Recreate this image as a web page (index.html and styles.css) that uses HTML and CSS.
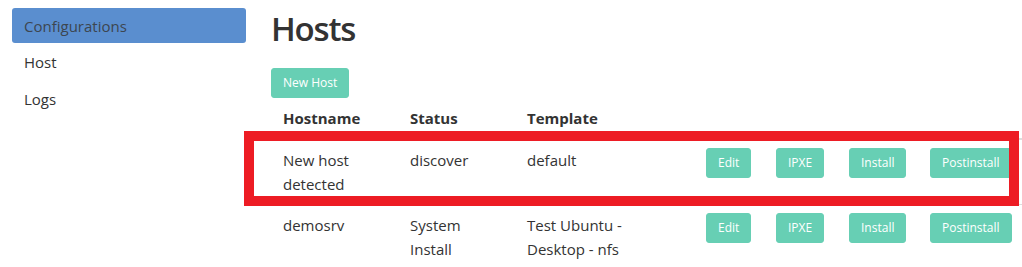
FILE: index.html
```html
<!DOCTYPE html>
<html lang="en">
<head>
    <meta charset="UTF-8">
    <meta name="viewport" content="width=device-width, initial-scale=1.0">
    <title>Hosts</title>
    <link rel="stylesheet" href="styles.css">
</head>
<body>
    <div class="layout">
        <nav class="sidebar">
            <a class="nav-item active" href="#">Configurations</a>
            <a class="nav-item" href="#">Host</a>
            <a class="nav-item" href="#">Logs</a>
        </nav>
        <main class="content">
            <h1>Hosts</h1>
            <button class="btn">New Host</button>
            <table class="hosts">
                <colgroup>
                    <col class="c-name">
                    <col class="c-status">
                    <col class="c-template">
                    <col class="c-edit">
                    <col class="c-ipxe">
                    <col class="c-install">
                    <col class="c-post">
                </colgroup>
                <thead>
                    <tr>
                        <th>Hostname</th>
                        <th>Status</th>
                        <th>Template</th>
                        <th></th>
                        <th></th>
                        <th></th>
                        <th></th>
                    </tr>
                </thead>
                <tbody>
                    <tr>
                        <td>New host detected</td>
                        <td>discover</td>
                        <td>default</td>
                        <td><button class="btn">Edit</button></td>
                        <td><button class="btn">IPXE</button></td>
                        <td><button class="btn">Install</button></td>
                        <td><button class="btn">Postinstall</button></td>
                    </tr>
                    <tr>
                        <td>demosrv</td>
                        <td>System Install</td>
                        <td><span class="tpl">Test Ubuntu - Desktop - nfs</span></td>
                        <td><button class="btn">Edit</button></td>
                        <td><button class="btn">IPXE</button></td>
                        <td><button class="btn">Install</button></td>
                        <td><button class="btn">Postinstall</button></td>
                    </tr>
                </tbody>
            </table>
        </main>
    </div>
    <div class="highlight"></div>
</body>
</html>
```

FILE: styles.css
```css
body {
    font-family: "Open Sans", "Noto Sans", sans-serif;
    font-size: 15px;
    line-height: 24px;
    color: #333;
    margin: 0;
    padding: 0;
    background-color: #fff;
}
.layout {
    display: flex;
    gap: 25px;
    padding: 8px 0 0 12px;
}
.sidebar {
    width: 234px;
    flex-shrink: 0;
    display: flex;
    flex-direction: column;
}
.nav-item {
    display: block;
    padding: 6px 12px;
    height: 24px;
    color: #333;
    text-decoration: none;
}
.nav-item.active {
    background-color: #5a8ecf;
    border-radius: 3px;
    color: #3d4650;
    height: 23px;
}
.nav-item + .nav-item {
    margin-top: 1px;
}
.content {
    flex: 1;
    min-width: 0;
}
h1 {
    font-size: 33px;
    font-weight: 600;
    letter-spacing: -1.2px;
    line-height: 40px;
    margin: 1px 0 19px;
    color: #333;
}
.btn {
    font-family: inherit;
    font-size: 12px;
    line-height: 18px;
    color: #fff;
    background-color: #67cfb4;
    border: 1px solid #67cfb4;
    border-radius: 3px;
    padding: 5px 11px;
    cursor: pointer;
}
.hosts {
    border-collapse: collapse;
    table-layout: fixed;
    width: 751px;
}
.c-name { width: 127px; }
.c-status { width: 117px; }
.c-template { width: 179px; }
.c-edit { width: 70px; }
.c-ipxe { width: 73px; }
.c-install { width: 81px; }
.c-post { width: 104px; }
.hosts th,
.hosts td {
    text-align: left;
    vertical-align: top;
    padding: 8px 12px;
}
.hosts th {
    font-weight: 700;
    border-bottom: 2px solid #ddd;
}
.hosts td {
    border-top: 1px solid #ddd;
}
.tpl {
    display: inline-block;
    max-width: 100px;
}
.highlight {
    position: absolute;
    left: 244px;
    top: 131px;
    width: 755px;
    height: 55px;
    border: 10px solid #ed1c24;
}
```
